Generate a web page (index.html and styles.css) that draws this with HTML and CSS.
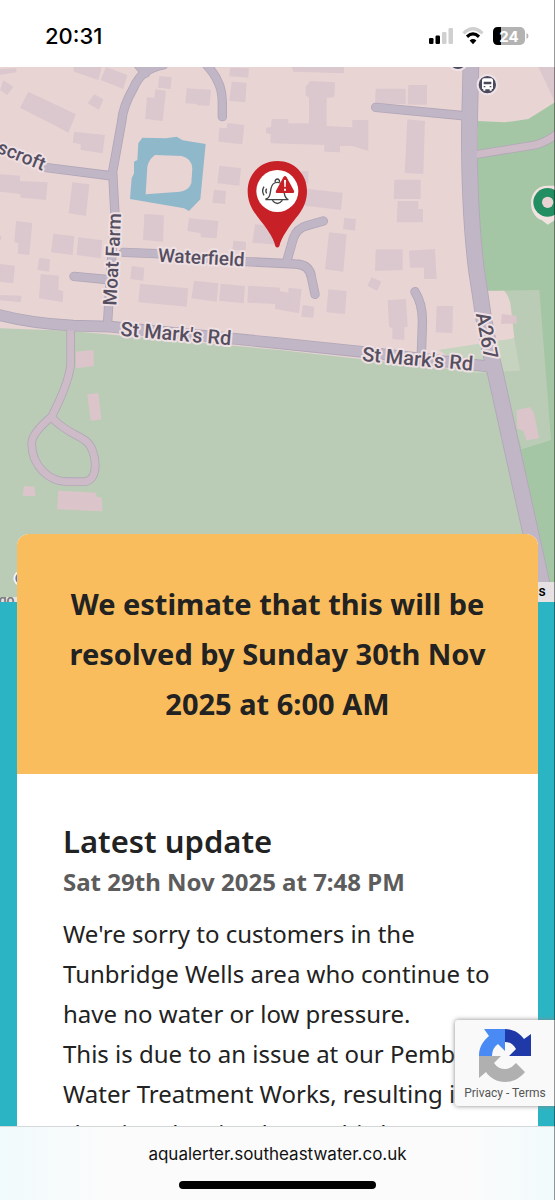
FILE: index.html
```
<!DOCTYPE html>
<html lang="en">
<head>
    <meta charset="UTF-8">
    <meta name="viewport" content="width=device-width, initial-scale=1.0">
    <title>Aqualerter - South East Water</title>
    <link rel="stylesheet" href="styles.css">
</head>
<body>
    <!-- Phone status bar -->
    <header class="status-bar">
        <time class="clock">20:31</time>
        <div class="status-icons">
            <svg width="24" height="18" viewBox="0 0 24 18" aria-hidden="true">
                <rect x="0" y="11" width="4.500" height="6" rx="1.200"/>
                <rect x="6.500" y="8.500" width="4.500" height="8.500" rx="1.200"/>
                <rect class="dim" x="13" y="5" width="4.500" height="12" rx="1.200"/>
                <rect class="dim" x="19.500" y="1" width="4.500" height="16" rx="1.200"/>
            </svg>
            <svg width="22" height="18" viewBox="0 0 22 18" aria-hidden="true">
                <path class="wifi-dim" d="M1.500 6.300 Q11 -2.800 20.500 6.300"/>
                <path class="wifi" d="M5 9.700 Q11 4.200 17 9.700"/>
                <path d="M11 17.200 L7.600 13.500 Q11 10.600 14.400 13.500 Z"/>
            </svg>
            <svg width="36" height="18" viewBox="0 0 36 18" role="img" aria-label="Battery 24 percent">
                <rect class="battery" x="0" y="0" width="32" height="18" rx="5"/>
                <path d="M8 0 H5 Q0 0 0 5 V13 Q0 18 5 18 H8 Z"/>
                <path class="battery" d="M33.500 6 Q35.500 7 35.500 9 T33.500 12 Z"/>
                <text class="battery-text" x="16" y="14.500">24</text>
            </svg>
        </div>
    </header>

    <div class="viewport">
        <main class="page">
            <!-- Map of the affected area -->
            <svg class="map" viewBox="0 6 1665 1605" role="img" aria-label="Map of the affected area">
                <rect class="land" x="0" y="0" width="1665" height="1620"/>
                <path class="grass" d="M0 790 L205 797 L840 855 L1425 920 L1470 920 L1640 1620 H0 Z"/>
                <path class="wood" d="M1433 168 L1515 172 L1585 162 L1665 112 V1620 H1640 L1480 900 L1455 675 H1433 Z"/>
                <path class="building" d="M1615 6 H1665 V112 Z"/>
                <path class="grass" d="M1500 677 L1618 675 L1653 1125 L1565 1153 L1485 860 Z"/>
                <path class="land" d="M1440 677 H1512 Q1530 695 1533 730 L1543 820 L1490 840 Z"/>
                <path class="meadow" d="M1315 855 L1543 820 L1560 917 L1425 925 Z"/>

                <!-- Buildings -->
                <g class="building">
                    <path d="M0 12 L48 10 L50 22 L0 30 Z M220 6 H305 L295 45 L222 20 Z M318 6 L382 30 L370 72 L302 45 Z"/>
                    <path d="M10 45 L40 65 L22 90 L0 75 Z M85 80 L228 148 L205 203 L172 185 L60 128 Z M283 88 L310 103 L297 135 L263 115 Z"/>
                    <path d="M222 200 L315 210 L308 265 L242 255 V238 L218 233 Z M0 328 L60 332 V348 L143 352 L138 405 L62 398 L60 387 L0 380 Z"/>
                    <path d="M217 352 L268 358 L258 453 L206 445 Z M48 468 L97 474 L88 570 L53 566 L55 535 L43 532 Z"/>
                    <path d="M160 506 L223 514 L218 570 L153 562 Z M235 517 L307 526 L302 580 L230 570 Z M118 578 L150 583 L148 620 L112 614 Z"/>
                    <path d="M0 597 L45 602 L40 655 L0 650 Z M122 627 L177 632 L175 675 L190 678 L188 712 L117 700 Z M395 603 L433 608 L430 647 L391 642 Z"/>
                    <path d="M420 656 L565 670 L560 725 L415 712 Z M582 647 L655 655 L650 710 L574 700 Z M662 656 L735 663 L731 715 L657 707 Z M745 662 L840 668 V718 L742 713 Z"/>
                    <path d="M433 447 L492 451 L489 530 L429 525 Z M567 460 L655 468 L650 520 L602 517 V505 L562 498 Z M700 527 L738 530 L737 558 L697 554 Z"/>
                    <path d="M765 478 L840 485 V540 L757 533 Z M478 33 L515 37 L512 72 L474 68 Z M466 73 L498 77 L488 168 L435 162 L441 97 L463 98 Z"/>
                    <path d="M560 70 L633 74 L629 122 L590 121 V117 L556 115 Z M690 8 L747 10 L745 38 L688 34 Z M695 50 L740 53 L736 112 L688 108 Z"/>
                    <path d="M682 174 L733 180 L727 238 L655 230 L658 188 L680 190 Z M658 302 L723 310 L718 362 L652 355 Z M642 374 L678 378 L675 417 L637 413 Z"/>
                    <path d="M0 690 L65 692 L62 712 L0 706 Z M0 510 L5 518 L0 528 Z"/>
                    <path d="M815 162 L865 162 V175 H927 V98 L917 90 V65 L931 48 L1005 52 L1003 97 L980 98 V183 L1057 187 V165 H1105 V258 L1057 243 H1020 V262 L973 260 V240 L812 235 V208 L798 204 V188 L813 186 Z"/>
                    <path d="M875 6 H1032 V25 L880 20 Z M1127 71 H1217 V117 H1125 Z M1225 60 H1281 V119 H1223 Z M1222 163 L1275 168 L1270 327 L1214 324 Z"/>
                    <path d="M1183 344 H1262 V402 H1181 Z M1193 408 H1255 V432 H1269 V472 H1190 Z M905 370 L1028 383 L1023 435 L915 422 Z M905 318 H925 V355 H905 Z"/>
                    <path d="M1033 458 L1068 462 L1065 497 L1029 492 Z M987 502 L1040 508 L1030 620 L975 613 Z M1127 553 H1208 V615 L1125 618 Z"/>
                    <path d="M1227 557 L1305 552 L1310 642 H1272 V608 H1230 Z M1115 637 L1145 650 L1131 677 L1102 662 Z M825 675 L865 683 V668 L905 672 L897 745 L825 732 Z"/>
                    <path d="M985 673 L1040 678 L1035 747 L979 742 Z M1163 705 L1218 702 L1223 785 L1213 787 V825 L1177 822 V790 L1167 785 Z M908 720 L943 725 L940 758 L904 755 Z M1310 723 H1359 L1357 805 L1307 802 Z"/>
                </g>
                <g class="shed">
                    <path d="M228 860 L280 855 L282 903 L228 910 Z M262 988 L295 985 L304 1063 L272 1067 Z M72 1263 L103 1265 L106 1293 L68 1292 Z"/>
                    <path d="M175 1277 L288 1283 L290 1295 L305 1298 L307 1339 L172 1333 Z M1505 747 L1550 753 V775 L1503 777 Z M1550 1035 L1590 1027 L1602 1045 L1617 1120 L1580 1126 L1570 1098 L1552 1090 Z"/>
                </g>
                <path class="water" fill-rule="evenodd" d="M427 218 L497 220 L530 215 L548 226 L617 237 L601 403 L567 438 L552 430 L390 402 L395 340 L402 325 V290 L412 285 L415 235 Z M465 270 L545 273 Q575 280 577 310 L574 355 Q565 378 540 380 L437 388 L442 305 Q445 285 465 270 Z"/>

                <!-- Roads, casing first and fill over it -->
                <defs>
                    <g id="lanes">
                        <path d="M415 0 L437 25 M490 0 Q425 10 400 70 Q368 125 365 170 L338 320 L345 450 L332 620 L322 785"/>
                        <path d="M620 0 Q667 50 667 110 V155"/>
                        <path d="M140 308 L338 333 M222 634 L335 645"/>
                        <path d="M370 562 L470 566 L740 590 L885 597 Q930 597 935 640 L945 688"/>
                        <path d="M860 590 L880 520 Q890 490 920 482 L970 468"/>
                        <path d="M1127 127 L1400 153 M1245 680 Q1270 720 1267 780 L1264 870"/>
                    </g>
                    <path id="trails" d="M212 790 V895 Q210 945 155 1055 Q95 1105 95 1135 C95 1205 150 1250 200 1250 H255 C300 1245 290 1155 260 1130 C240 1110 200 1105 158 1060 M1420 270 L1605 240 Q1640 232 1680 200"/>
                    <path id="street" d="M-10 748 Q90 775 220 782 L330 785 L840 835 L1100 862 L1470 905"/>
                    <path id="main-road" d="M1413 -10 L1408 200 Q1408 450 1430 620 L1443 705 Q1455 800 1485 920 L1640 1620"/>
                </defs>
                <use class="casing trail" href="#trails"/>
                <use class="casing lane" href="#lanes"/>
                <use class="casing street" href="#street"/>
                <use class="casing main-road" href="#main-road"/>
                <use class="fill trail" href="#trails"/>
                <use class="fill lane" href="#lanes"/>
                <use class="fill street" href="#street"/>
                <use class="fill main-road" href="#main-road"/>

                <!-- Road names -->
                <text class="road-name" transform="translate(-40 250) rotate(22)">escroft</text>
                <text class="road-name" transform="translate(349 722) rotate(-87)">Moat Farm</text>
                <text class="road-name" transform="translate(473 590) rotate(3)">Waterfield</text>
                <text class="road-name large" transform="translate(360 812) rotate(5)">St Mark's Rd</text>
                <text class="road-name large" transform="translate(1085 888) rotate(5)">St Mark's Rd</text>
                <text class="road-name large" transform="translate(1427 746) rotate(79)">A267</text>

                <!-- Bus stops -->
                <circle class="stop" cx="1374" cy="-14" r="29"/>
                <circle class="stop" cx="1462" cy="59" r="29"/>
                <path class="bus" fill-rule="evenodd" d="M1452 40 H1473 Q1479 40 1479 46 V71 L1475 73 V77 H1469 V73 H1456 V77 H1450 V73 L1446 71 V46 Q1446 40 1452 40 Z M1451 50 V58 H1474 V50 Z M1451 63 V67 H1456 V63 Z M1469 63 V67 H1474 V63 Z"/>
                <!-- Park -->
                <path class="park-ring" d="M1643 362 C1580 362 1580 450 1625 465 L1643 479 L1665 465 V362 Z"/>
                <circle class="park" cx="1643" cy="412" r="43"/>
                <circle class="land" cx="1643" cy="412" r="17"/>

                <!-- Incident pin -->
                <g>
                    <path class="alert" d="M832 288 C780 288 743 328 743 378 C743 432 778 457 802 494 Q823 525 826 544 Q832 551 838 544 Q841 525 862 494 C886 457 921 432 921 378 C921 328 884 288 832 288 Z"/>
                    <circle class="white" cx="832" cy="378" r="63"/>
                    <path class="bell" d="M798 402 Q809 399 811 382 L813 370 Q817 352 832 352 Q847 352 850 370 L853 385 Q855 399 865 404 H798 Z M817 406 Q832 425 847 406 M825 351 Q826 342 832 342 Q838 342 839 351 M792 365 Q784 378 792 391 M800 371 Q795 378 800 385"/>
                    <path class="alert" d="M850 337 Q855 329 860 337 L882 377 Q884 384 877 384 H833 Q825 384 828 377 Z"/>
                    <path class="white" d="M852 345 H858 L857 366 H853 Z M852 371 H858 V377 H852 Z"/>
                </g>

                <!-- Map credits -->
                <circle class="logo" cx="64" cy="1540" r="21"/>
                <rect class="credits" x="0" y="1596" width="60" height="20"/>
                <text class="credit-text grey" x="-4" y="1619">go</text>
                <rect class="credits" x="1590" y="1551" width="75" height="60"/>
                <text class="credit-text" x="1637" y="1592" text-anchor="end">Terms</text>
            </svg>

            <article class="card">
                <h1 class="estimate">We estimate that this will be resolved by Sunday 30th Nov 2025 at 6:00 AM</h1>
                <section class="update">
                    <h2>Latest update</h2>
                    <p class="update-date">Sat 29th Nov 2025 at 7:48 PM</p>
                    <p>We're sorry to customers in the Tunbridge Wells area who continue to have no water or low pressure.<br>This is due to an issue at our Pembury Water Treatment Works, resulting in shutting the site down. This has</p>
                </section>
            </article>
        </main>

        <!-- reCAPTCHA badge -->
        <aside class="captcha">
            <svg width="52" height="54" viewBox="0 0 52 54" aria-hidden="true">
                <path fill="#2039a8" d="M26 0 C34 0 41 4 45 10 L52 5 V27 H30 L37 20 Q33 13 26 13 Z"/>
                <path fill="#4a8af5" d="M26 0 V22 L19 15 Q13 19 13 27 H0 C0 18 4 12 10 7 L5 0 Z"/>
                <path fill="#b0b0b0" d="M0 27 H22 L15 34 Q19 40 26 40 Q32 40 37 34 L46 43 C40 50 34 53 26 53 C18 53 11 49 7 43 L0 49 Z"/>
            </svg>
            <div class="captcha-links"><a href="#privacy">Privacy</a> - <a href="#terms">Terms</a></div>
        </aside>
    </div>

    <!-- Browser address bar -->
    <footer class="address-bar">
        <a class="address" href="#">aqualerter.southeastwater.co.uk</a>
        <div class="home-indicator"></div>
    </footer>
</body>
</html>
```

FILE: styles.css
```
* {
    box-sizing: border-box;
}

body {
    margin: 0;
    height: 100vh;
    display: flex;
    flex-direction: column;
    font-family: "Noto Sans", "Open Sans", sans-serif;
    color: #222;
    background: #fff;
}

/* Thin line down the right edge of the screen */
body::after {
    content: "";
    position: fixed;
    top: 0;
    right: 0;
    bottom: 0;
    width: 1px;
    background: rgba(0, 0, 0, 0.4);
}

a {
    color: inherit;
    text-decoration: none;
}

/* Status bar */
.status-bar {
    display: flex;
    justify-content: space-between;
    align-items: center;
    height: 67px;
    padding: 4px 26px 0 45px;
    flex-shrink: 0;
}

.clock {
    font: 500 22px Inter, sans-serif;
    color: #000;
}

.status-icons {
    display: flex;
    gap: 9px;
}

.dim {
    fill: #d0d0d0;
}

.wifi,
.wifi-dim {
    fill: none;
    stroke: #000;
    stroke-width: 3.2;
}

.wifi-dim {
    stroke: #d0d0d0;
}

.battery {
    fill: #b3b3b3;
}

.battery-text {
    font: 700 15px Inter, sans-serif;
    fill: #fff;
    text-anchor: middle;
}

/* Page content between the two bars */
.viewport {
    position: relative;
    flex: 1;
    min-height: 0;
    background: #2bb5c4;
}

.page {
    height: 100%;
    overflow-y: auto;
    scrollbar-width: none;
}

/* Map */
.map {
    display: block;
    width: 100%;
    height: auto;
}

.land {
    fill: #e9d4d4;
}

.grass {
    fill: #bbccb6;
}

.wood {
    fill: #a5c6a5;
}

.meadow {
    fill: #c5d3bf;
}

.building {
    fill: #dbc8ce;
}

.shed {
    fill: #dcc5ca;
}

.water {
    fill: #8fb8cb;
}

.casing,
.fill {
    fill: none;
    stroke-linecap: round;
    stroke-linejoin: round;
}

.casing {
    stroke: #b1a7b8;
}

.fill {
    stroke: #c0b6c5;
}

.fill.trail {
    stroke: #cebbc8;
}

.casing.trail {
    stroke-width: 26px;
}

.fill.trail {
    stroke-width: 21px;
}

.casing.lane {
    stroke-width: 28px;
}

.fill.lane {
    stroke-width: 23px;
}

.casing.street {
    stroke-width: 35px;
}

.fill.street {
    stroke-width: 30px;
}

.casing.main-road {
    stroke-width: 50px;
}

.fill.main-road {
    stroke-width: 45px;
}

.road-name {
    font: 500 57px Roboto, sans-serif;
    fill: #554e60;
    stroke: #eee0e3;
    stroke-width: 12px;
    stroke-linejoin: round;
    paint-order: stroke;
}

.road-name.large {
    font-size: 60px;
}

.stop {
    fill: #4b495b;
    stroke: #eee3e8;
    stroke-width: 6px;
}

.bus,
.white {
    fill: #fff;
}

.park-ring {
    fill: #f1e3e2;
}

.park {
    fill: #238e62;
}

.alert {
    fill: #c82027;
}

.bell {
    fill: none;
    stroke: #444;
    stroke-width: 4px;
}

.logo {
    fill: #5a78c8;
    stroke: #f4f4f4;
    stroke-width: 6px;
}

.credits {
    fill: #e6e2e4;
}

.credit-text {
    font: 500 42px Roboto, sans-serif;
}

.credit-text.grey {
    fill: #777;
}

/* Incident card, pulled up over the map */
.card {
    position: relative;
    margin: -68px 17px 0;
    background: #fff;
    border-radius: 12px 12px 0 0;
    overflow: hidden;
}

.estimate {
    margin: 0;
    padding: 45px;
    background: #fabd5e;
    font-size: 29px;
    line-height: 50px;
    text-align: center;
}

.update {
    padding: 46px 20px 46px 46px;
    font-size: 24px;
    line-height: 40px;
}

.update h2 {
    margin: 0;
    font-size: 31px;
    font-weight: 600;
    line-height: 42px;
}

.update p {
    margin: 0;
}

.update .update-date {
    margin-bottom: 12px;
    font-weight: 700;
    color: #5c5c5c;
}

/* reCAPTCHA badge */
.captcha {
    position: absolute;
    right: 0;
    bottom: 20px;
    display: flex;
    flex-direction: column;
    align-items: center;
    width: 100px;
    padding: 9px 0 2px;
    background: #f9f9f9;
    border-radius: 3px 0 0 3px;
    box-shadow: 0 0 5px #888;
}

.captcha-links {
    font: 12px/21px Roboto, sans-serif;
    color: #555;
}

/* Address bar */
.address-bar {
    display: flex;
    flex-direction: column;
    align-items: center;
    justify-content: space-between;
    height: 74px;
    padding: 14px 0 11px;
    flex-shrink: 0;
    border-top: 1px solid #d5d8d9;
    background: linear-gradient(to right, #f1fafc, #fbfbfb 20%, #fbfbfb 85%, #f1fafc);
}

.address {
    font: 17px/26px Inter, sans-serif;
    color: #111;
}

.home-indicator {
    width: 197px;
    height: 8px;
    border-radius: 4px;
    background: #000;
}
```
